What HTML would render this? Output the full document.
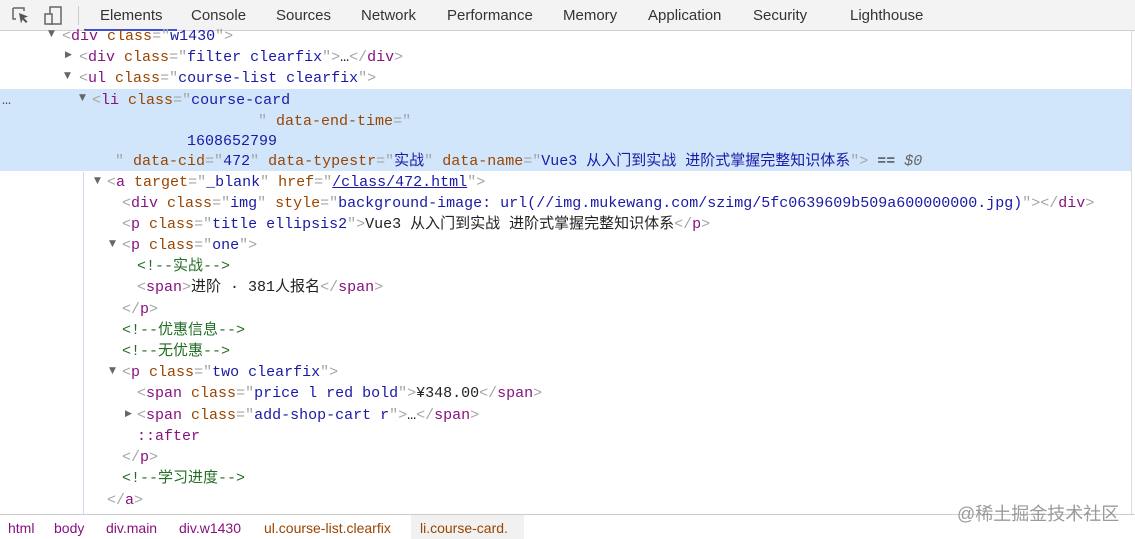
<!DOCTYPE html>
<html><head><meta charset="utf-8"><style>
*{margin:0;padding:0;box-sizing:border-box}
body{width:1135px;height:539px;overflow:hidden;background:#fff;position:relative;font-family:"Liberation Sans","Noto Sans CJK SC",sans-serif}
.tb{position:absolute;left:0;top:0;width:1135px;height:31px;background:#f3f3f3;border-bottom:1px solid #cfcfcf}
.tab{position:absolute;top:7px;font-size:15px;color:#333}
.ul{position:absolute;left:85px;top:29px;width:92px;height:2px;background:#3e50d6}
.sep{position:absolute;left:78px;top:6px;width:1px;height:19px;background:#ccc}
.sel{position:absolute;left:0;top:89px;width:1131px;height:82px;background:#d1e5fb}
.row{position:absolute;white-space:pre;font-family:"Liberation Mono","Noto Sans CJK SC",monospace;font-size:15px;line-height:21px;color:#222}
.t{color:#881280}.a{color:#994500}.v{color:#1a1aa6}.g{color:#a5a5a5}.cm{color:#236e25}
.tri{position:absolute;font-size:9px;color:#666;font-family:"DejaVu Sans",sans-serif}
.vl{position:absolute;left:83px;top:172px;width:1px;height:342px;background:#d6d6ff}
.rl{position:absolute;left:1131px;top:31px;width:1px;height:483px;background:#ddd}
.bc{position:absolute;left:0;top:514px;width:1135px;height:25px;border-top:1px solid #ccc;background:#fff}
.bi{position:absolute;top:5px;font-size:14px;color:#881280}
</style></head><body>
<div class="tb">
<svg style="position:absolute;left:11px;top:6px" width="20" height="20" viewBox="0 0 20 20"><path d="M2 2h11v3M2 2v11h3" fill="none" stroke="#666" stroke-width="1.5"/><path d="M8 7l9 3.5-4 1.5 3.5 3.5-1.5 1.5-3.5-3.5-1.5 4z" fill="#555"/></svg>
<svg style="position:absolute;left:43px;top:5px" width="20" height="22" viewBox="0 0 20 22"><rect x="7" y="2" width="11" height="17" fill="none" stroke="#666" stroke-width="1.5"/><rect x="2" y="9" width="7" height="10" fill="#f3f3f3" stroke="#666" stroke-width="1.5"/></svg>
<div class="sep"></div>
<span class="tab" style="left:100px">Elements</span>
<span class="tab" style="left:191px">Console</span>
<span class="tab" style="left:276px">Sources</span>
<span class="tab" style="left:361px">Network</span>
<span class="tab" style="left:447px">Performance</span>
<span class="tab" style="left:563px">Memory</span>
<span class="tab" style="left:648px">Application</span>
<span class="tab" style="left:753px">Security</span>
<span class="tab" style="left:850px">Lighthouse</span>
<div class="ul"></div>
</div>
<div class="sel"></div>
<div class="vl"></div><div class="rl"></div>
<div class="row" style="left:2px;top:90px;color:#555">…</div>

<span class="tri" style="left:48px;top:29px">▼</span>
<div class="row" style="left:62px;top:26px"><span class="g">&lt;</span><span class="t">div</span> <span class="a">class</span><span class="g">="</span><span class="v">w1430</span><span class="g">"&gt;</span></div>
<span class="tri" style="left:65px;top:50px">▶</span>
<div class="row" style="left:79px;top:47px"><span class="g">&lt;</span><span class="t">div</span> <span class="a">class</span><span class="g">="</span><span class="v">filter clearfix</span><span class="g">"&gt;</span>…<span class="g">&lt;/</span><span class="t">div</span><span class="g">&gt;</span></div>
<span class="tri" style="left:64px;top:71px">▼</span>
<div class="row" style="left:79px;top:68px"><span class="g">&lt;</span><span class="t">ul</span> <span class="a">class</span><span class="g">="</span><span class="v">course-list clearfix</span><span class="g">"&gt;</span></div>
<span class="tri" style="left:79px;top:93px">▼</span>
<div class="row" style="left:92px;top:90px"><span class="g">&lt;</span><span class="t">li</span> <span class="a">class</span><span class="g">="</span><span class="v">course-card</span></div>
<div class="row" style="left:258px;top:111px"><span class="g">"</span> <span class="a">data-end-time</span><span class="g">="</span></div>
<div class="row" style="left:187px;top:131px"><span class="v">1608652799</span></div>
<div class="row" style="left:115px;top:151px"><span class="g">"</span> <span class="a">data-cid</span><span class="g">="</span><span class="v">472</span><span class="g">"</span> <span class="a">data-typestr</span><span class="g">="</span><span class="v">实战</span><span class="g">"</span> <span class="a">data-name</span><span class="g">="</span><span class="v">Vue3 从入门到实战 进阶式掌握完整知识体系</span><span class="g">"&gt;</span> == <i style="color:#666">$0</i></div>
<span class="tri" style="left:94px;top:176px">▼</span>
<div class="row" style="left:107px;top:172px"><span class="g">&lt;</span><span class="t">a</span> <span class="a">target</span><span class="g">="</span><span class="v">_blank</span><span class="g">"</span> <span class="a">href</span><span class="g">="</span><span class="v" style="text-decoration:underline">/class/472.html</span><span class="g">"&gt;</span></div>
<div class="row" style="left:122px;top:193px"><span class="g">&lt;</span><span class="t">div</span> <span class="a">class</span><span class="g">="</span><span class="v">img</span><span class="g">"</span> <span class="a">style</span><span class="g">="</span><span class="v">background-image: url(//img.mukewang.com/szimg/5fc0639609b509a600000000.jpg)</span><span class="g">"&gt;&lt;/</span><span class="t">div</span><span class="g">&gt;</span></div>
<div class="row" style="left:122px;top:214px"><span class="g">&lt;</span><span class="t">p</span> <span class="a">class</span><span class="g">="</span><span class="v">title ellipsis2</span><span class="g">"&gt;</span>Vue3 从入门到实战 进阶式掌握完整知识体系<span class="g">&lt;/</span><span class="t">p</span><span class="g">&gt;</span></div>
<span class="tri" style="left:109px;top:239px">▼</span>
<div class="row" style="left:122px;top:235px"><span class="g">&lt;</span><span class="t">p</span> <span class="a">class</span><span class="g">="</span><span class="v">one</span><span class="g">"&gt;</span></div>
<div class="row cm" style="left:137px;top:256px">&lt;!--实战--&gt;</div>
<div class="row" style="left:137px;top:277px"><span class="g">&lt;</span><span class="t">span</span><span class="g">&gt;</span>进阶 · 381人报名<span class="g">&lt;/</span><span class="t">span</span><span class="g">&gt;</span></div>
<div class="row" style="left:122px;top:299px"><span class="g">&lt;/</span><span class="t">p</span><span class="g">&gt;</span></div>
<div class="row cm" style="left:122px;top:320px">&lt;!--优惠信息--&gt;</div>
<div class="row cm" style="left:122px;top:341px">&lt;!--无优惠--&gt;</div>
<span class="tri" style="left:109px;top:366px">▼</span>
<div class="row" style="left:122px;top:362px"><span class="g">&lt;</span><span class="t">p</span> <span class="a">class</span><span class="g">="</span><span class="v">two clearfix</span><span class="g">"&gt;</span></div>
<div class="row" style="left:137px;top:383px"><span class="g">&lt;</span><span class="t">span</span> <span class="a">class</span><span class="g">="</span><span class="v">price l red bold</span><span class="g">"&gt;</span>¥348.00<span class="g">&lt;/</span><span class="t">span</span><span class="g">&gt;</span></div>
<span class="tri" style="left:125px;top:409px">▶</span>
<div class="row" style="left:137px;top:405px"><span class="g">&lt;</span><span class="t">span</span> <span class="a">class</span><span class="g">="</span><span class="v">add-shop-cart r</span><span class="g">"&gt;</span>…<span class="g">&lt;/</span><span class="t">span</span><span class="g">&gt;</span></div>
<div class="row t" style="left:137px;top:426px">::after</div>
<div class="row" style="left:122px;top:447px"><span class="g">&lt;/</span><span class="t">p</span><span class="g">&gt;</span></div>
<div class="row cm" style="left:122px;top:468px">&lt;!--学习进度--&gt;</div>
<div class="row" style="left:107px;top:490px"><span class="g">&lt;/</span><span class="t">a</span><span class="g">&gt;</span></div>

<div class="bc">
<span class="bi" style="left:8px">html</span>
<span class="bi" style="left:54px">body</span>
<span class="bi" style="left:106px">div.main</span>
<span class="bi" style="left:179px">div.w1430</span>
<span class="bi" style="left:264px;color:#994500">ul.course-list.clearfix</span>
<div style="position:absolute;left:411px;top:0;width:113px;height:24px;background:#f1f1f1"></div>
<span class="bi" style="left:420px;color:#994500">li.course-card.</span>
</div>
<div style="position:absolute;left:957px;top:500px;font-size:18px;color:#9a9a9a;font-family:'Liberation Sans','Noto Sans CJK SC',sans-serif">@稀土掘金技术社区</div>
</body></html>
